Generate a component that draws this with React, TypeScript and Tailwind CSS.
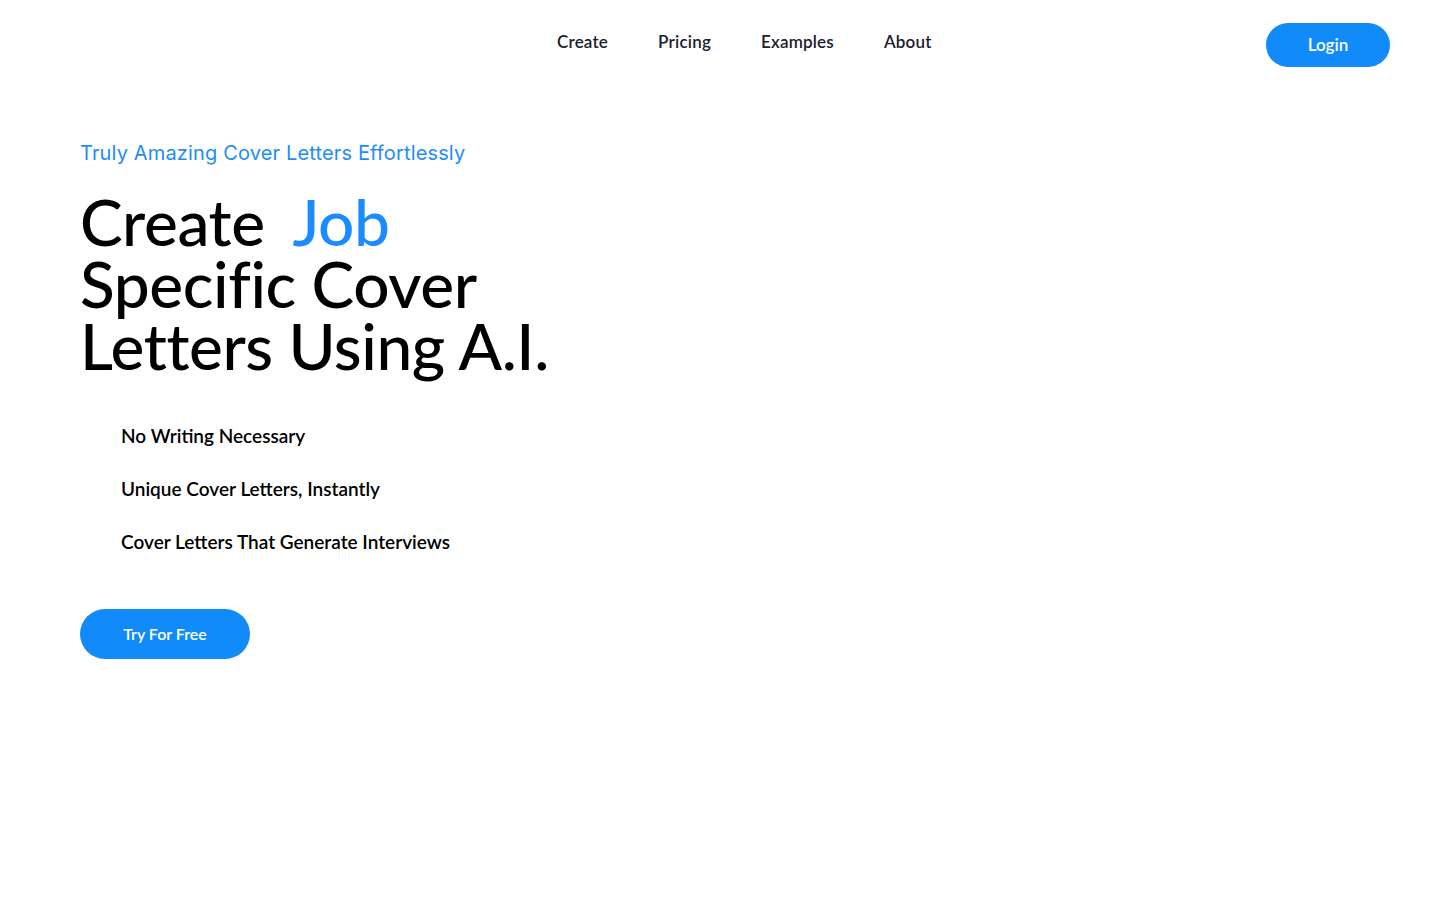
import React from "react";

const font = { fontFamily: "Lato, 'Noto Sans', sans-serif" };

export default function App() {
  return (
    <div className="min-h-[900px] w-full bg-white" style={font}>
      <header className="flex h-[90px] items-center px-[50px]">
        <div className="w-[507px]" />
        <nav className="flex gap-[50px] pb-[6px] text-[17px] font-semibold tracking-[0.2px] text-[#1a202c]">
          <a href="#">Create</a>
          <a href="#">Pricing</a>
          <a href="#">Examples</a>
          <a href="#">About</a>
        </nav>
        <div className="ml-auto">
          <button className="h-[44px] w-[124px] rounded-full bg-[#118bfa] text-[17px] font-semibold text-white">
            Login
          </button>
        </div>
      </header>
      <main className="px-[80px]">
        <p
          className="mt-[49px] text-[20px] leading-[28px] tracking-[0.15px] text-[#1e8ef5]"
          style={{ fontFamily: "Inter, sans-serif" }}
        >
          Truly Amazing Cover Letters Effortlessly
        </p>
        <h1 className="mt-[24px] text-[64px] font-medium leading-[62px] tracking-[-0.4px] text-black">
          Create <span className="ml-[12px] text-[#1a8cff]">Job</span>
          <br />
          Specific Cover
          <br />
          Letters Using A.I.
        </h1>
        <ul className="mt-[45px] flex flex-col gap-[25px] pl-[41px] text-[19px] font-semibold leading-[28px] text-black">
          <li>No Writing Necessary</li>
          <li>Unique Cover Letters, Instantly</li>
          <li>Cover Letters That Generate Interviews</li>
        </ul>
        <button className="mt-[53px] h-[50px] w-[170px] rounded-full bg-[#118bfa] text-[16px] font-semibold text-white">
          Try For Free
        </button>
      </main>
    </div>
  );
}
